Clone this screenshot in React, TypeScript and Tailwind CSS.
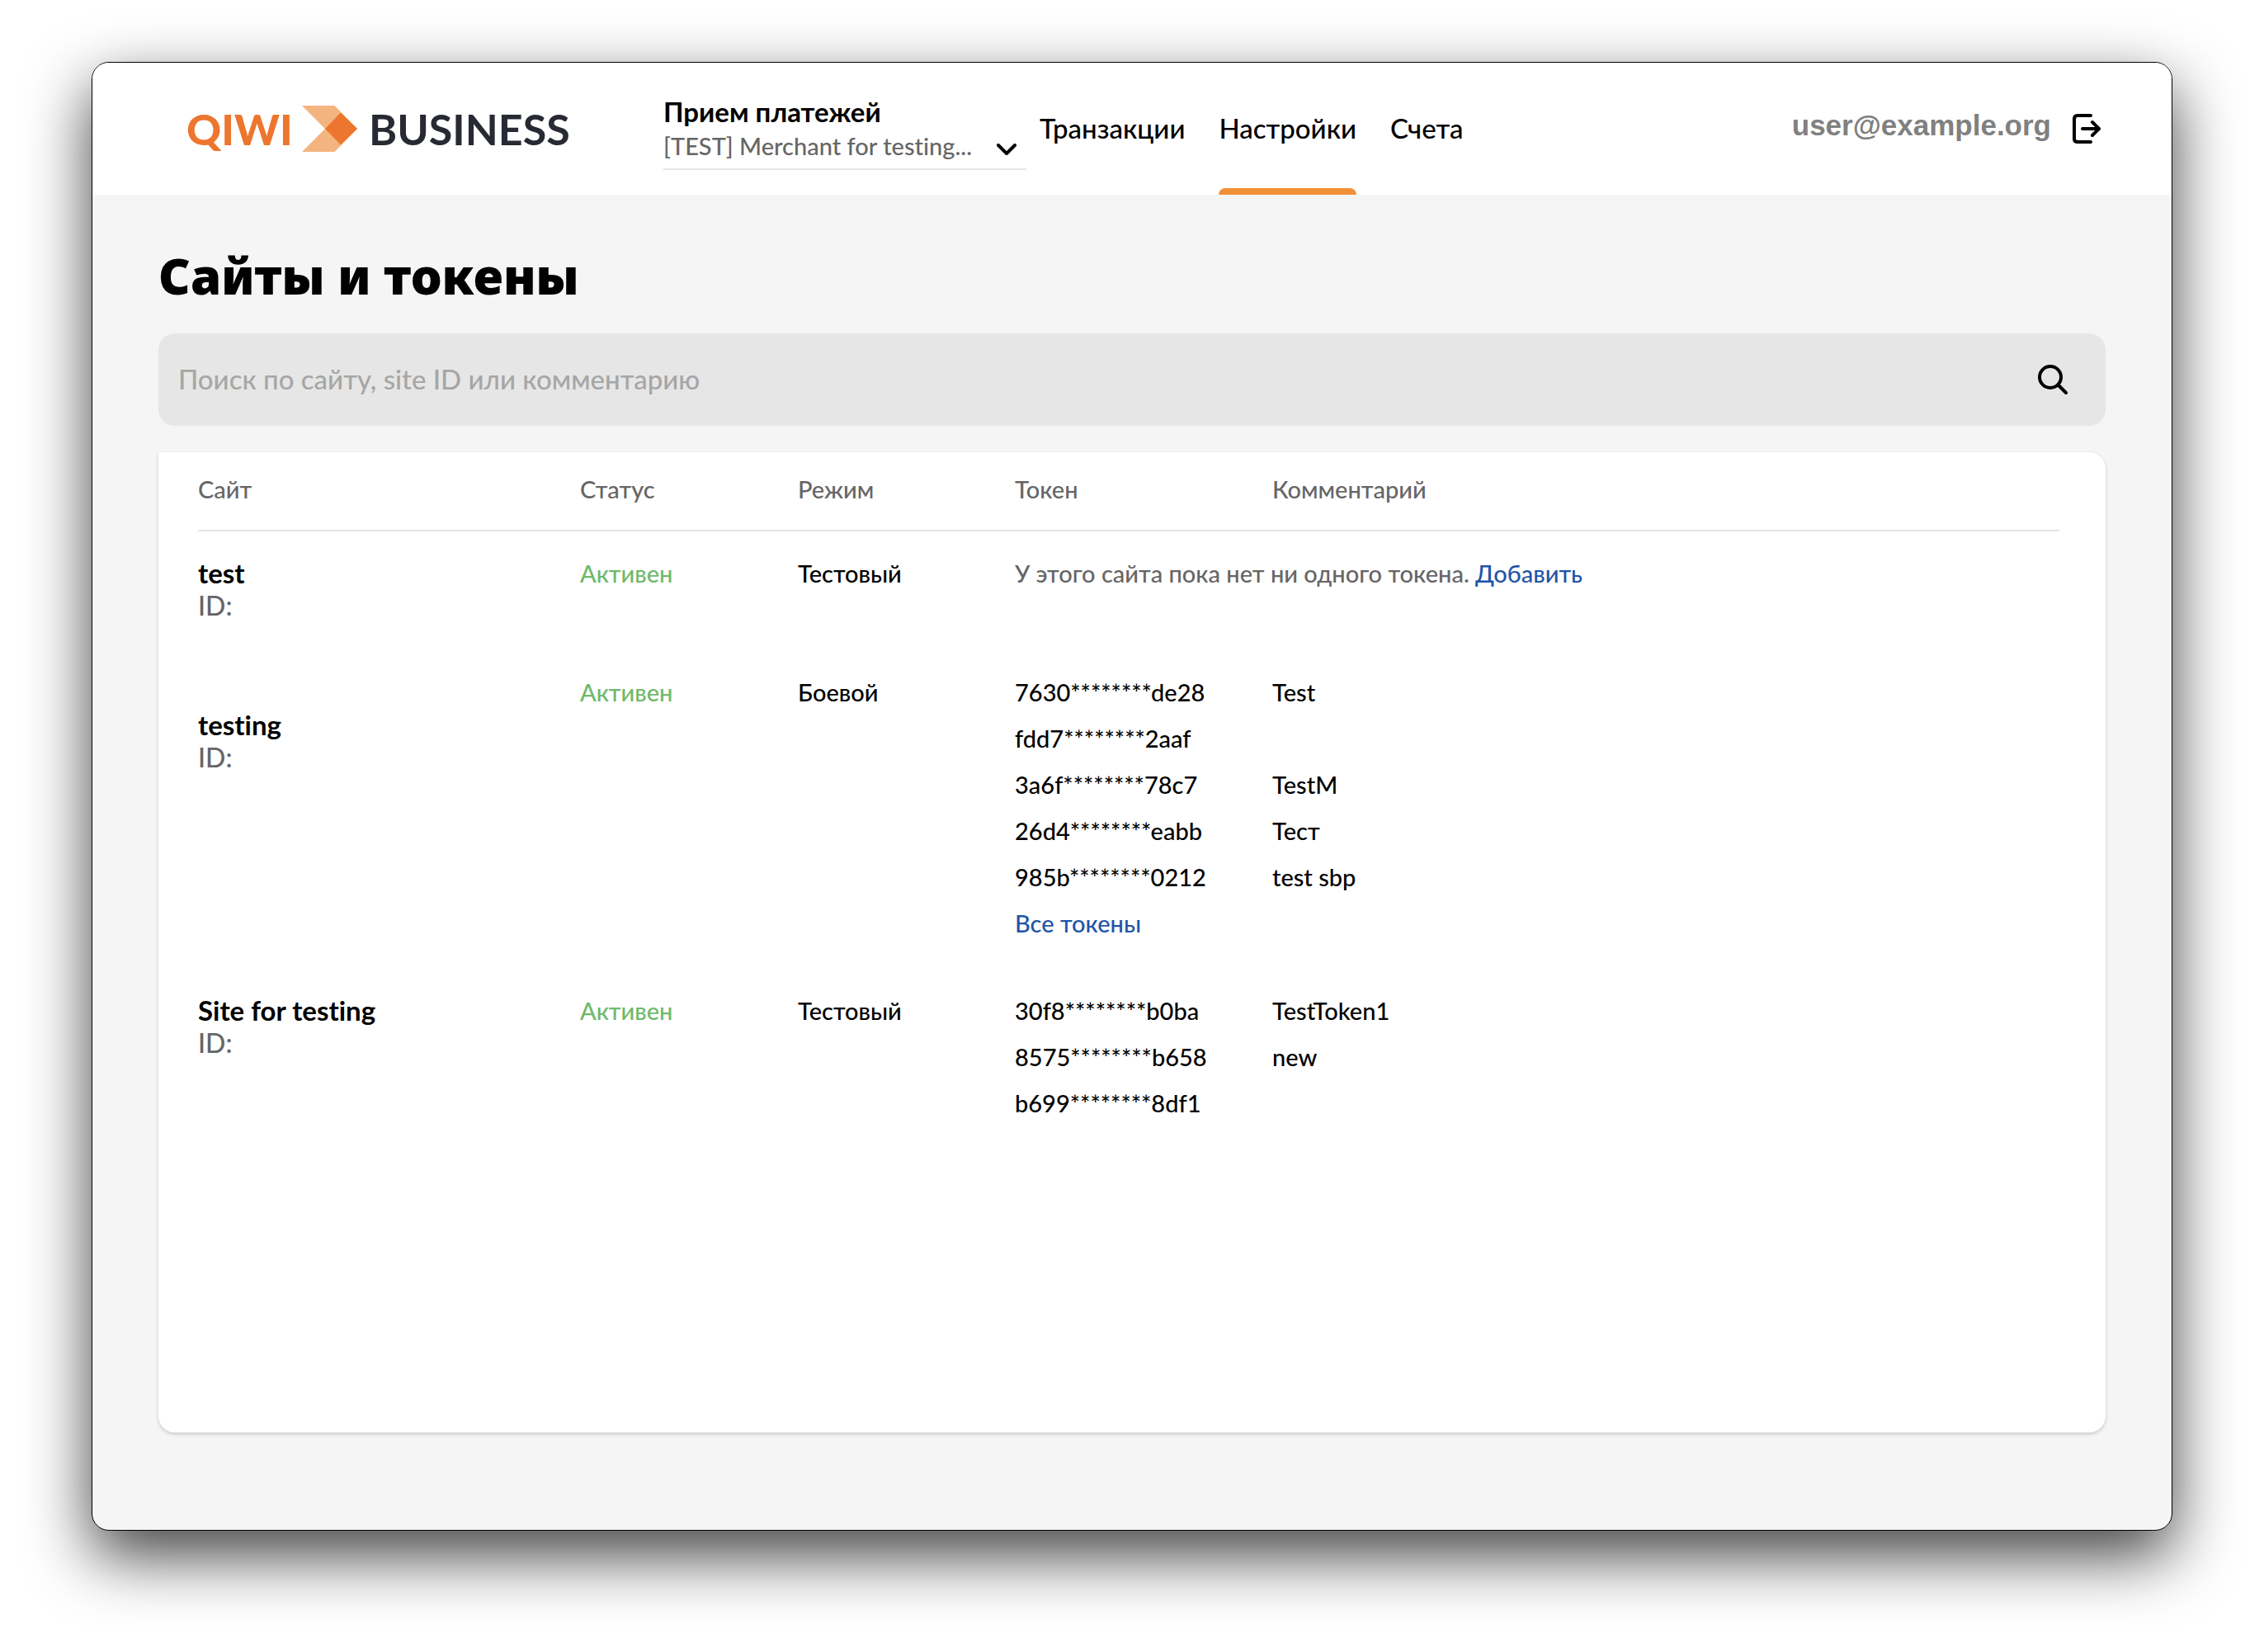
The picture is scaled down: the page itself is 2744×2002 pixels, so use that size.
import { useState } from "react";

type Token = { value: string; comment?: string };

type Site = {
	name: string;
	mode: string;
	tokens: Token[];
	hasMore?: boolean;
	nameClass: string;
};

const sites: Site[] = [
	{ name: "test", mode: "Тестовый", tokens: [], nameClass: "pt-[30px]" },
	{
		name: "testing",
		mode: "Боевой",
		hasMore: true,
		nameClass: "pt-[70px]",
		tokens: [
			{ value: "7630********de28", comment: "Test" },
			{ value: "fdd7********2aaf" },
			{ value: "3a6f********78c7", comment: "TestM" },
			{ value: "26d4********eabb", comment: "Тест" },
			{ value: "985b********0212", comment: "test sbp" },
		],
	},
	{
		name: "Site for testing",
		mode: "Тестовый",
		nameClass: "pt-[30px]",
		tokens: [
			{ value: "30f8********b0ba", comment: "TestToken1" },
			{ value: "8575********b658", comment: "new" },
			{ value: "b699********8df1" },
		],
	},
];

const navItems = ["Транзакции", "Настройки", "Счета"];

const Logo = () => (
	<a href="#" className="flex items-center font-['Lato',sans-serif] text-[52px] leading-[56px]">
		<span className="w-[140px] font-black text-[#ed762f]">QIWI</span>
		<svg width="67" height="56" viewBox="0 0 67 56" className="mr-[14px]">
			<path d="M0 0H39.5L67 28L39.5 56H0L28 28Z" fill="#f4b47f" />
			<path d="M47 8.5L67 28L47 47.5L28 28Z" fill="#ed762f" />
		</svg>
		<span className="font-bold text-[#272a33]">BUSINESS</span>
	</a>
);

const MerchantSelect = () => (
	<div className="flex w-[440px] flex-col border-b-2 border-[#e5e5e5] pt-[9px] pb-[5px]">
		<label htmlFor="merchant" className="font-['Lato',sans-serif] text-[33px] leading-10 font-bold">
			Прием платежей
		</label>
		<div className="relative">
			<select
				id="merchant"
				className="w-full appearance-none bg-transparent text-[29px] leading-[44px] text-[#666] outline-none"
			>
				<option>[TEST] Merchant for testing...</option>
			</select>
			<svg
				width="24"
				height="14"
				viewBox="0 0 24 14"
				fill="none"
				stroke="#000"
				strokeWidth="4"
				strokeLinecap="round"
				strokeLinejoin="round"
				className="pointer-events-none absolute top-[19px] right-3"
			>
				<path d="M2 2L12 12L22 2" />
			</svg>
		</div>
	</div>
);

const Header = () => (
	<header className="flex h-[160px] items-center bg-white pr-[86px] pl-[114px]">
		<div className="w-[578px]">
			<Logo />
		</div>
		<MerchantSelect />
		<nav className="ml-4 flex h-full gap-[41px]">
			{navItems.map((item) => (
				<a
					key={item}
					href="#"
					className={
						item === "Настройки"
							? "flex flex-col justify-end text-[33px] after:h-2 after:rounded-t-[8px] after:bg-[#f19135]"
							: "flex flex-col justify-end text-[33px] after:h-2"
					}
				>
					<span className="pb-[53px] leading-10 font-medium">{item}</span>
				</a>
			))}
		</nav>
		<div className="ml-auto flex items-center gap-[26px]">
			<span className="pb-2 font-['Liberation_Sans',sans-serif] text-[35px] leading-10 font-bold text-[#808080]">
				user@example.org
			</span>
			<button aria-label="Выйти">
				<svg
					width="34"
					height="36"
					viewBox="0 0 34 36"
					fill="none"
					stroke="#000"
					strokeWidth="4"
					strokeLinecap="round"
					strokeLinejoin="round"
				>
					<path d="M22 2H6Q2 2 2 6V30Q2 34 6 34H22" />
					<path d="M12 18H32M24 10L32 18L24 26" />
				</svg>
			</button>
		</div>
	</header>
);

const SiteRow = ({ site }: { site: Site }) => (
	<tr className="h-[144px] align-top">
		<td className={site.nameClass}>
			<div className="font-['Lato',sans-serif] text-[33px] leading-10 font-bold">{site.name}</div>
			<div className="text-[32px] leading-10 text-[#666]">ID:</div>
		</td>
		<td className="pt-[23px] pb-[27px] text-[#6fb96c]">Активен</td>
		<td className="pt-[23px] pb-[27px]">{site.mode}</td>
		{site.tokens.length === 0 ? (
			<td colSpan={2} className="pt-[23px] pb-[27px] text-[#666]">
				У этого сайта пока нет ни одного токена.{" "}
				<a href="#" className="text-[#1f55a8]">
					Добавить
				</a>
			</td>
		) : (
			<>
				<td className="pt-[23px] pb-[27px]">
					<ul>
						{site.tokens.map((token) => (
							<li key={token.value}>{token.value}</li>
						))}
					</ul>
					{site.hasMore && (
						<a href="#" className="text-[#1f55a8]">
							Все токены
						</a>
					)}
				</td>
				<td className="pt-[23px] pb-[27px]">
					<ul>
						{site.tokens.map((token) => (
							<li key={token.value} className="h-14">
								{token.comment}
							</li>
						))}
					</ul>
				</td>
			</>
		)}
	</tr>
);

export default function App() {
	const [search, setSearch] = useState("");

	return (
		<div className="flex min-h-screen flex-col bg-white px-[111px] pt-[75px] pb-[147px] font-['Lato_Medium','Lato','Noto_Sans',sans-serif] text-black [font-variant-ligatures:none]">
			<div className="flex flex-1 flex-col overflow-hidden rounded-[21px] border border-black bg-[#f5f5f5] shadow-[0_30px_78px_rgba(0,0,0,0.75)]">
				<Header />
				<main className="flex flex-1 flex-col px-20 pt-[60px] pb-[118px]">
					<h1 className="font-['Noto_Sans',sans-serif] text-[60px] leading-[76px] font-black">Сайты и токены</h1>
					<div className="mt-8 flex h-[112px] items-center rounded-[20px] bg-[#e6e6e6] pr-[46px] pl-6">
						<input
							type="text"
							aria-label="Поиск"
							value={search}
							onChange={(e) => setSearch(e.target.value)}
							placeholder="Поиск по сайту, site ID или комментарию"
							className="h-12 flex-1 bg-transparent text-[33px] font-medium outline-none placeholder:text-[#a6a6a6]"
						/>
						<button aria-label="Найти">
							<svg
								width="36"
								height="36"
								viewBox="0 0 36 36"
								fill="none"
								stroke="#000"
								strokeWidth="4"
								strokeLinecap="round"
							>
								<circle cx="15" cy="15" r="13" />
								<path d="M25 25L34 34" />
							</svg>
						</button>
					</div>
					<div className="mt-8 flex-1 rounded-[20px] rounded-tl-none bg-white pr-14 pl-12 shadow-[0_2px_4px_rgba(0,0,0,0.18)]">
						<table className="w-full table-fixed border-separate border-spacing-0 text-[29px] leading-[56px] font-medium">
							<colgroup>
								<col className="w-[463px]" />
								<col className="w-[264px]" />
								<col className="w-[263px]" />
								<col className="w-[312px]" />
								<col />
							</colgroup>
							<thead>
								<tr className="text-left leading-10 text-[#666]">
									{["Сайт", "Статус", "Режим", "Токен", "Комментарий"].map((title) => (
										<th key={title} className="border-b-2 border-[#e5e5e5] pt-[25px] pb-[29px] font-medium">
											{title}
										</th>
									))}
								</tr>
							</thead>
							<tbody>
								{sites.map((site) => (
									<SiteRow key={site.name} site={site} />
								))}
							</tbody>
						</table>
					</div>
				</main>
			</div>
		</div>
	);
}
